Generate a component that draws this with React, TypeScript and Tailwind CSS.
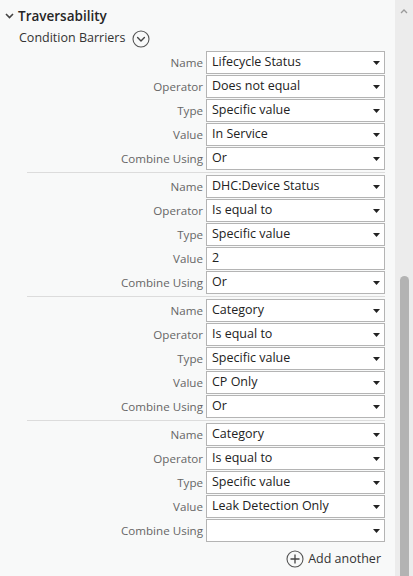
import React from "react";

type Row = { label: string; value: string; dropdown?: boolean };

const groups: Row[][] = [
  [
    { label: "Name", value: "Lifecycle Status" },
    { label: "Operator", value: "Does not equal" },
    { label: "Type", value: "Specific value" },
    { label: "Value", value: "In Service" },
    { label: "Combine Using", value: "Or" },
  ],
  [
    { label: "Name", value: "DHC:Device Status" },
    { label: "Operator", value: "Is equal to" },
    { label: "Type", value: "Specific value" },
    { label: "Value", value: "2", dropdown: false },
    { label: "Combine Using", value: "Or" },
  ],
  [
    { label: "Name", value: "Category" },
    { label: "Operator", value: "Is equal to" },
    { label: "Type", value: "Specific value" },
    { label: "Value", value: "CP Only" },
    { label: "Combine Using", value: "Or" },
  ],
  [
    { label: "Name", value: "Category" },
    { label: "Operator", value: "Is equal to" },
    { label: "Type", value: "Specific value" },
    { label: "Value", value: "Leak Detection Only" },
    { label: "Combine Using", value: "" },
  ],
];

function CircleChevron() {
  return (
    <svg width="18" height="18" viewBox="0 0 18 18" fill="none">
      <circle cx="9" cy="9" r="8" stroke="#555" strokeWidth="1.1" />
      <path d="M5.6 7.6 9 11l3.4-3.4" stroke="#444" strokeWidth="1.4" strokeLinecap="round" strokeLinejoin="round" />
    </svg>
  );
}

function CirclePlus() {
  return (
    <svg width="18" height="18" viewBox="0 0 18 18" fill="none">
      <circle cx="9" cy="9" r="8" stroke="#555" strokeWidth="1.1" />
      <path d="M9 4.5v9M4.5 9h9" stroke="#444" strokeWidth="1.3" />
    </svg>
  );
}

function Field({ row }: { row: Row }) {
  const dropdown = row.dropdown !== false;
  return (
    <>
      <div className="flex h-[23px] items-center justify-end text-[11.6px] text-[#666]">{row.label}</div>
      <div className="flex h-[23px] items-center border border-[#b4b4b4] bg-white pl-[5px] pr-[3px] text-[12.5px] text-[#222]">
        <span className="flex-1 truncate">{row.value}</span>
        {dropdown ? (
          <svg width="7" height="4" viewBox="0 0 7 4" className="mr-[1px]">
            <path d="M0 0h7L3.5 4z" fill="#222" />
          </svg>
        ) : null}
      </div>
    </>
  );
}

export default function App() {
  return (
    <div
      className="flex h-[576px] w-[413px] overflow-hidden bg-[#f8f9f9]"
      style={{ fontFamily: '"Open Sans", "Noto Sans", sans-serif' }}
    >
      <div className="min-w-0 flex-1">
        <div className="mt-[5px] flex h-[22px] items-center">
          <svg width="9" height="6" viewBox="0 0 9 6" className="ml-[5px] mr-[4px]">
            <path d="M1 1l3.5 3.5L8 1" stroke="#444" strokeWidth="1.6" fill="none" />
          </svg>
          <span className="text-[13.5px] font-semibold text-[#262626]">Traversability</span>
        </div>
        <div className="mt-[1px] flex h-[21px] items-center pl-[19px]">
          <span className="text-[12.5px] text-[#333]">Condition Barriers</span>
          <span className="ml-[7px] flex">
            <CircleChevron />
          </span>
        </div>

        <div className="ml-[27px] mt-[2px] w-[358px]">
          {groups.map((g, i) => (
            <div key={i} className={i === 0 ? "pb-[2px]" : "border-t border-[#dcdcdc] pt-[2px] pb-[2px]"}>
              <div className="grid grid-cols-[176px_179px] gap-x-[3px] gap-y-[1px]">
                {g.map((row) => (
                  <Field key={row.label} row={row} />
                ))}
              </div>
            </div>
          ))}
        </div>

        <div className="mt-[4px] flex h-[22px] items-center justify-end pr-[14px]">
          <CirclePlus />
          <span className="ml-[4px] text-[12.5px] text-[#333]">Add another</span>
        </div>
      </div>

      <div className="flex w-[18px] shrink-0 flex-col items-center bg-[#ececec]">
        <svg width="8" height="5" viewBox="0 0 8 5" className="mt-[9px]">
          <path d="M1 4l3-3 3 3" stroke="#9a9a9a" strokeWidth="1.3" fill="none" />
        </svg>
        <div className="mt-[262px] w-[9px] flex-1 rounded-t-[5px] bg-[#b3b3b3]" />
      </div>
    </div>
  );
}
